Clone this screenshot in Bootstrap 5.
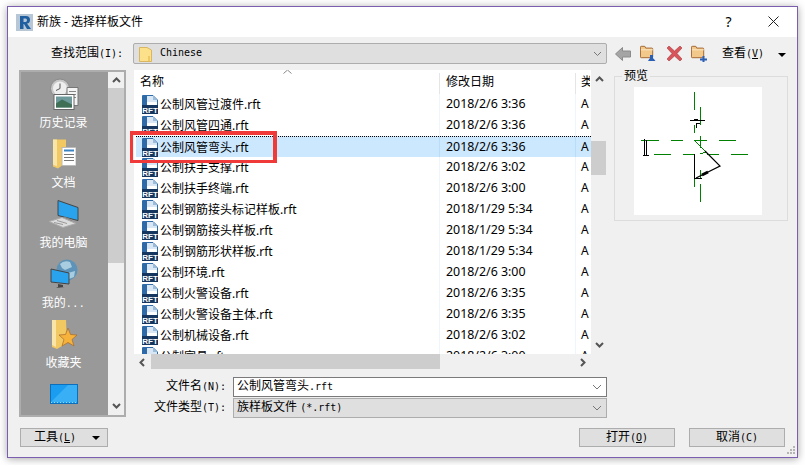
<!DOCTYPE html>
<html lang="zh">
<head>
<meta charset="utf-8">
<title>新族 - 选择样板文件</title>
<link href="https://cdn.jsdelivr.net/npm/bootstrap@5.3.0/dist/css/bootstrap.min.css" rel="stylesheet">
<style>
html,body{margin:0;height:465px;overflow:hidden;background:#fff}
body{font:12px/1.2 "Noto Sans","Noto Sans CJK SC",sans-serif;color:#000;padding:6px 7px 0}
.mn{font-family:"DejaVu Sans Mono","Liberation Mono",monospace;font-size:10px}
.dlg{width:791px;height:452px;border:1px solid #7b5fae;background:#f0f0f0;box-shadow:0 1px 8px rgba(0,0,0,.35);position:relative}
.ttl{height:30px;background:#fff;padding-left:8px;font-size:12px}
.ttl-x{width:45px;justify-content:center}
.pane{padding:6px 0 0 11px}
.lbl{width:114px;padding-right:10px;text-align:right}
.combo{width:474px;height:21px;background:#dfdfdf;border:1px solid #adadad;border-radius:2px;padding:0 4px 0 5px}
.combo .mn{margin-top:-2px}
.tools{margin-left:8px;width:172px;white-space:nowrap}
.side{width:107px;height:347px;border:2px solid #adadad;background:#fff;box-sizing:border-box}
.side-in{width:87px;background:#999;color:#fff;overflow:hidden;padding-top:5px}
.pl{height:60px;text-align:center;padding-right:2px}
.pl svg{display:block;margin:0 auto;height:34px}
.pl span{display:block;margin-top:4px;line-height:16px;font-size:12px}
.pl span.mn{display:inline;font-size:10px;letter-spacing:.5px;margin:0}
.vb{width:16px;background:#f0f0f0;position:relative}
.thumb{background:#cdcdcd}
.side .vb .thumb{position:absolute;left:0;right:0;top:16px;height:175px}
.arw{position:absolute;left:0;width:16px;height:16px;display:flex;align-items:center;justify-content:center}
.mid{width:473px;margin-left:8px}
.lst{height:299px;background:#f0f0f0}
.lst-l{width:457px}
.view{height:284px;background:#fff;overflow:hidden;position:relative}
.hd{height:24px;padding-top:3px;line-height:18px}
.hc1{width:306px;padding-left:6px;border-right:1px solid #e5e5e5}
.hc2{width:136px;padding-left:6px;border-right:1px solid #e5e5e5}
.hc3{padding-left:5px;white-space:nowrap;overflow:hidden;width:14px}
.sortm{position:absolute;left:149px;top:-1px}
.rw{height:21px;line-height:20px;font-size:12px}
.rw .c1{width:306px;padding-left:8px;display:flex;align-items:center;border-right:1px solid #eef5fb;flex:none}
.rw .c1 svg{margin-right:2px;flex:none}
.rw .c2{width:136px;padding-left:6px;border-right:1px solid #eef5fb;flex:none;font-size:12.4px}
.rw .c3{padding-left:5px;width:14px;overflow:hidden;flex:none;color:#000}
.sel{background:#cce8ff;margin-left:2px;border-top:1px dotted #000;line-height:19px}
.sel .c1{width:304px;padding-left:6px;border-right-color:#b9dcf7}
.sel .c2{border-right-color:#b9dcf7}
.redbox{position:absolute;left:122px;top:124px;width:147px;height:32px;border:4px solid #f03a3a;border-width:4px 4px 3px 3px;pointer-events:none}
.hb{height:15px;background:#f0f0f0;position:relative}
.hb .thumb{position:absolute;left:17px;width:289px;top:0;bottom:0}
.vb2 .thumb{position:absolute;left:0;right:1px;top:71px;height:34px}
.frow{height:21px}
.flbl{width:99px;padding-right:7px;text-align:right;white-space:nowrap}
.fld{width:374px;height:20px;border:1px solid #7a7a7a;background:#fff;padding:0 4px 0 3px}
.fld2{background:#dfdfdf;border-color:#adadad}
.grp{margin:6px 0 0 7px;width:174px;height:145px;border:1px solid #dcdcdc;position:relative;padding:10px 0 0 19px}
.grp-t{position:absolute;left:7px;top:-9px;background:#f0f0f0;padding:0 2px;line-height:16px}
.pvw{width:128px;height:128px;background:#fff;display:block}
.foot{padding:10px 0 0 1px;width:766px}
.wb{height:19px;padding:0;font-size:12px;line-height:16px;border:1px solid #adadad;border-radius:0;background:#dfdfdf;color:#000;width:96px}
.wb:hover{background:#dfdfdf}
.wb-t{width:88px;padding:0 7px 0 13px}
.tri{width:0;height:0;border:4px solid transparent;border-top-color:#000;border-bottom:0;display:inline-block}
.ugl{text-decoration:underline}
.grip{position:absolute;right:2px;bottom:2px}
</style>
</head>
<body>
<svg width="0" height="0" class="position-absolute">
<symbol id="rft" viewBox="0 0 16 19">
<path d="M.5.5H11L15.5 5V12H.5Z" fill="#fff" stroke="#2e6aa8"/>
<path d="M1 1H5V11H1Z" fill="#2e6aa8"/><path d="M5 1H11L11 5H15V7L5 7Z" fill="#d9e6f3"/><path d="M11 1L15 5H11Z" fill="#9cbcdc"/>
<rect y="10" width="16" height="9" fill="#14365f"/>
<text x="8" y="17.6" text-anchor="middle" font-family="Liberation Sans,sans-serif" font-size="8" font-weight="700" fill="#fff">RFT</text>
</symbol>
<symbol id="fold" viewBox="0 0 16 16">
<path d="M.5 13.5V2.5q0-1 1-1h4l1 2h7q1 0 1 1v9q0 1-1 1h-12q-1 0-1-1Z" fill="#f3c98b" stroke="#9a5a26"/>
<path d="M1 5.5H15" stroke="#fbe8c8"/>
</symbol>
</svg>

<div class="dlg d-flex flex-column">
  <div class="ttl d-flex align-items-center">
    <svg width="17" height="17" viewBox="0 0 17 17" class="me-1"><rect width="17" height="17" fill="#b7c7d6"/><path d="M4 15V2H10Q14 2 14 6 14 9 11 9.6L15 15H11L8 10H7.5V15ZM7.5 4.500V8H9.500Q11 8 11 6.200 11 4.500 9.500 4.500Z" fill="#1f5fa0"/></svg>
    <span>新族 - 选择样板文件</span>
    <div class="ms-auto d-flex align-items-center" style="margin-right:1px">
      <span class="ttl-x d-flex" style="font-size:14px">?</span>
      <span class="ttl-x d-flex"><svg width="11" height="11" viewBox="0 0 11 11"><path d="M.5.500 10.500 10.500M10.500.500.500 10.500" stroke="#222" fill="none"/></svg></span>
    </div>
  </div>

  <div class="pane flex-grow-1">
    <div class="d-flex align-items-center" style="height:21px">
      <div class="lbl">查找范围<span class="mn">(I):</span></div>
      <div class="combo d-flex align-items-center">
        <svg width="13" height="16" viewBox="0 0 13 16" class="me-2"><path d="M.5 15.500V1.500H8L12.500 4V15.500Z" fill="#fde08a" stroke="#d9b760"/><path d="M10 10V15" stroke="#e0b040"/></svg>
        <span class="mn">Chinese</span>
        <svg class="ms-auto" width="9" height="6" viewBox="0 0 9 6"><path d="M1 1 4.500 4.500 8 1" stroke="#777" fill="none"/></svg>
      </div>
      <div class="tools d-flex align-items-center">
        <svg width="16" height="14" viewBox="0 0 16 14"><path d="M7.500.5V4H15.500V10H7.500V13.500L.5 7Z" fill="#a5a5a5" stroke="#8b8b8b"/></svg>
        <svg width="16" height="17" viewBox="0 0 16 17" style="margin-left:9px"><use href="#fold" width="14" height="14"/><path d="M8 16H15.500L13.500 13.500H13V10H10V13.500H9.500Z" fill="#2b5fb5"/></svg>
        <svg width="15" height="15" viewBox="0 0 15 15" style="margin-left:11px"><path d="M2 0 7.500 5 13 0 15 2 10 7.500 15 13 13 15 7.500 10 2 15 0 13 5 7.500 0 2Z" fill="#d8555c" stroke="#a83a40" stroke-width=".6"/></svg>
        <svg width="16" height="17" viewBox="0 0 16 17" style="margin-left:9px"><use href="#fold" width="14" height="14"/><path d="M9 13.500H11.500V11H13.500V13.500H16V15.500H13.500V17H11.500V15.500H9Z" fill="#2b5fb5"/></svg>
        <span style="margin-left:15px">查看<span class="mn">(<span class="ugl">V</span>)</span></span>
        <span class="tri" style="margin:2px 0 0 14px"></span>
      </div>
    </div>

    <div class="d-flex align-items-start" style="margin-top:6px">
      <div class="side d-flex">
        <div class="side-in">
          <div class="pl">
            <svg width="30" height="31" viewBox="0 0 30 31"><circle cx="11" cy="10" r="9.500" fill="#c6c6c6" stroke="#8a8a8a"/><circle cx="11" cy="10" r="7" fill="#eee"/><path d="M11 5V10L7 12" stroke="#555" fill="none"/><path d="M18 9H29V27H18Z" fill="#f4f4f4" stroke="#777"/><path d="M20 13H27M20 16H27M20 19H27" stroke="#888"/><rect x="5" y="16" width="20" height="15" fill="#fff" stroke="#666"/><rect x="7" y="18" width="16" height="11" fill="#6f9a9c"/><path d="M7 25 13 21 23 26V29H7Z" fill="#3f6f55"/></svg>
            <span>历史记录</span>
          </div>
          <div class="pl">
            <svg width="24" height="31" viewBox="0 0 24 31"><path d="M1 1H14V24L6 30 1 28Z" fill="#f2c862"/><path d="M1 1H5V28L1 26Z" fill="#fae5a8"/><rect x="10" y="9" width="14" height="18" fill="#fff" stroke="#bbb"/><path d="M12 12H22" stroke="#3a82c4" stroke-width="2"/><path d="M12 16H22M12 19H22M12 22H22" stroke="#777"/></svg>
            <span>文档</span>
          </div>
          <div class="pl">
            <svg width="31" height="29" viewBox="0 0 31 29"><path d="M10 1 30 8V21L10 16Z" fill="#2aa3ee" stroke="#444"/><path d="M16 17 24 20V22L15 20Z" fill="#888"/><path d="M1 22 14 18 28 24 15 28Z" fill="#dcdcdc" stroke="#aaa"/><path d="M6 23 15 25M9 21 19 24" stroke="#999"/></svg>
            <span>我的电脑</span>
          </div>
          <div class="pl">
            <svg width="28" height="30" viewBox="0 0 28 30"><circle cx="17" cy="11" r="10.500" fill="#5d93b8"/><path d="M10 5Q14 1 20 3L22 8 15 11 12 9ZM18 14 25 12 24 18 19 20Z" fill="#a9cde0"/><path d="M1 10 19 14V25L1 23Z" fill="#2aa3ee" stroke="#444"/><path d="M8 25 13 26V28H15L6 29 8 28Z" fill="#444"/></svg>
            <span class="mt-1">我的<span class="mn">...</span></span>
          </div>
          <div class="pl">
            <svg width="26" height="30" viewBox="0 0 26 30"><path d="M1 1H15L16 24 6 30 1 28Z" fill="#f2c862"/><path d="M1 1H5V28L1 26Z" fill="#fae5a8"/><path d="M17 9 19.500 15.500 26 16 21 20.500 23 27 17 23.500 11 27 13 20.500 8 16 14.500 15.500Z" fill="#f7b23c" stroke="#a56a28" stroke-width=".7"/></svg>
            <span>收藏夹</span>
          </div>
          <div class="pl">
            <svg width="28" height="20" viewBox="0 0 28 20"><rect x=".5" y=".5" width="27" height="19" fill="#1a9cf0" stroke="#0c6fbb"/><path d="M1 18 18 1H27V18Z" fill="#39b0f5"/><path d="M1 18.500H27" stroke="#9ad8fa" stroke-dasharray="1 2"/></svg>
          </div>
        </div>
        <div class="vb flex-grow-1">
          <span class="arw" style="top:0"><svg width="9" height="6" viewBox="0 0 9 6"><path d="M1 5 4.500 1.500 8 5" stroke="#555" stroke-width="2" fill="none"/></svg></span>
          <div class="thumb"></div>
          <span class="arw" style="bottom:1px"><svg width="9" height="6" viewBox="0 0 9 6"><path d="M1 1 4.500 4.500 8 1" stroke="#555" stroke-width="2" fill="none"/></svg></span>
        </div>
      </div>

      <div class="mid">
        <div class="lst d-flex">
          <div class="lst-l">
            <div class="view">
              <div class="hd d-flex">
                <div class="hc1">名称</div>
                <div class="hc2">修改日期</div>
                <div class="hc3">类型</div>
              </div>
              <svg class="sortm" width="9" height="6" viewBox="0 0 9 6"><path d="M.5 4.500 4.500 1 8.500 4.500" stroke="#888" fill="none"/></svg>
              <div class="rw d-flex"><div class="c1"><svg width="16" height="19"><use href="#rft"/></svg>公制风管过渡件.rft</div><div class="c2">2018/2/6 3:36</div><div class="c3">A</div></div>
              <div class="rw d-flex"><div class="c1"><svg width="16" height="19"><use href="#rft"/></svg>公制风管四通.rft</div><div class="c2">2018/2/6 3:36</div><div class="c3">A</div></div>
              <div class="rw sel d-flex"><div class="c1"><svg width="16" height="19"><use href="#rft"/></svg>公制风管弯头.rft</div><div class="c2">2018/2/6 3:36</div><div class="c3">A</div></div>
              <div class="rw d-flex"><div class="c1"><svg width="16" height="19"><use href="#rft"/></svg>公制扶手支撑.rft</div><div class="c2">2018/2/6 3:02</div><div class="c3">A</div></div>
              <div class="rw d-flex"><div class="c1"><svg width="16" height="19"><use href="#rft"/></svg>公制扶手终端.rft</div><div class="c2">2018/2/6 3:00</div><div class="c3">A</div></div>
              <div class="rw d-flex"><div class="c1"><svg width="16" height="19"><use href="#rft"/></svg>公制钢筋接头标记样板.rft</div><div class="c2">2018/1/29 5:34</div><div class="c3">A</div></div>
              <div class="rw d-flex"><div class="c1"><svg width="16" height="19"><use href="#rft"/></svg>公制钢筋接头样板.rft</div><div class="c2">2018/1/29 5:34</div><div class="c3">A</div></div>
              <div class="rw d-flex"><div class="c1"><svg width="16" height="19"><use href="#rft"/></svg>公制钢筋形状样板.rft</div><div class="c2">2018/1/29 5:34</div><div class="c3">A</div></div>
              <div class="rw d-flex"><div class="c1"><svg width="16" height="19"><use href="#rft"/></svg>公制环境.rft</div><div class="c2">2018/2/6 3:00</div><div class="c3">A</div></div>
              <div class="rw d-flex"><div class="c1"><svg width="16" height="19"><use href="#rft"/></svg>公制火警设备.rft</div><div class="c2">2018/2/6 3:35</div><div class="c3">A</div></div>
              <div class="rw d-flex"><div class="c1"><svg width="16" height="19"><use href="#rft"/></svg>公制火警设备主体.rft</div><div class="c2">2018/2/6 3:35</div><div class="c3">A</div></div>
              <div class="rw d-flex"><div class="c1"><svg width="16" height="19"><use href="#rft"/></svg>公制机械设备.rft</div><div class="c2">2018/2/6 3:02</div><div class="c3">A</div></div>
              <div class="rw d-flex"><div class="c1"><svg width="16" height="19"><use href="#rft"/></svg>公制家具.rft</div><div class="c2">2018/2/6 3:00</div><div class="c3">A</div></div>
            </div>
            <div class="hb">
              <span class="arw" style="top:0;left:0"><svg width="6" height="9" viewBox="0 0 6 9"><path d="M5 1 1.500 4.500 5 8" stroke="#555" stroke-width="2" fill="none"/></svg></span>
              <div class="thumb"></div>
              <span class="arw" style="top:0;left:441px"><svg width="6" height="9" viewBox="0 0 6 9"><path d="M1 1 4.500 4.500 1 8" stroke="#555" stroke-width="2" fill="none"/></svg></span>
            </div>
          </div>
          <div class="vb vb2 flex-grow-1">
            <span class="arw" style="top:1px"><svg width="9" height="6" viewBox="0 0 9 6"><path d="M1 5 4.500 1.500 8 5" stroke="#555" stroke-width="2" fill="none"/></svg></span>
            <div class="thumb"></div>
            <span class="arw" style="top:267px"><svg width="9" height="6" viewBox="0 0 9 6"><path d="M1 1 4.500 4.500 8 1" stroke="#555" stroke-width="2" fill="none"/></svg></span>
          </div>
        </div>
        <div class="frow d-flex align-items-center" style="margin-top:7px">
          <div class="flbl">文件名<span class="mn">(N):</span></div>
          <div class="fld d-flex align-items-center"><span>公制风管弯头<span class="mn">.rft</span></span><svg class="ms-auto" width="10" height="6" viewBox="0 0 10 6"><path d="M1 1 5 5 9 1" stroke="#777" fill="none"/></svg></div>
        </div>
        <div class="frow d-flex align-items-center">
          <div class="flbl">文件类型<span class="mn">(T):</span></div>
          <div class="fld fld2 d-flex align-items-center"><span>族样板文件 <span class="mn">(*.rft)</span></span><svg class="ms-auto" width="10" height="6" viewBox="0 0 10 6"><path d="M1 1 5 5 9 1" stroke="#777" fill="none"/></svg></div>
        </div>
      </div>

      <div class="grp">
        <span class="grp-t">预览</span>
        <svg class="pvw" viewBox="0 0 128 128" shape-rendering="crispEdges">
          <g stroke="#008000" fill="none">
            <path d="M60.500 5V23M60.500 38V46M60.500 91V100M66.500 20V38M66.500 49V61M66.500 83V91M66.500 97V115"/>
            <path d="M7 53.500H25M37 53.500H49M61 53.500H73M85 53.500H102M20 67.500H37M49 67.500H61M73 67.500H85M97 67.500H114"/>
            <path d="M60 53 72 65 66 67"/>
          </g>
          <g stroke="#000" fill="none">
            <path d="M60.500 67V92M61 91H68"/>
            <path d="M71 64 86 79 62 91" stroke-width="1.200" shape-rendering="auto"/>
            <path d="M68 88 74 85" stroke-width="3" shape-rendering="auto"/>
            <path d="M10.500 52V69M12.500 53V68M9 68.500H15M56 33H71M60 32.500H64M62 36.500H66M62 36V41" />
          </g>
        </svg>
      </div>
    </div>

    <div class="foot d-flex">
      <button type="button" class="btn wb wb-t d-flex align-items-center justify-content-between"><span>工具<span class="mn">(<span class="ugl">L</span>)</span></span><span class="tri"></span></button>
      <button type="button" class="btn wb ms-auto"><span>打开<span class="mn">(<span class="ugl">O</span>)</span></span></button>
      <button type="button" class="btn wb" style="margin-left:14px">取消<span class="mn">(C)</span></button>
    </div>
  </div>
  <svg class="grip" width="9" height="9" viewBox="0 0 9 9"><path d="M7 0h2v2H7zM4 3h2v2H4zM7 3h2v2H7zM1 6h2v2H1zM4 6h2v2H4zM7 6h2v2H7z" fill="#b5b5b5"/></svg>
  <div class="redbox"></div>
</div>
<script src="https://cdn.jsdelivr.net/npm/bootstrap@5.3.0/dist/js/bootstrap.bundle.min.js"></script>
</body>
</html>
